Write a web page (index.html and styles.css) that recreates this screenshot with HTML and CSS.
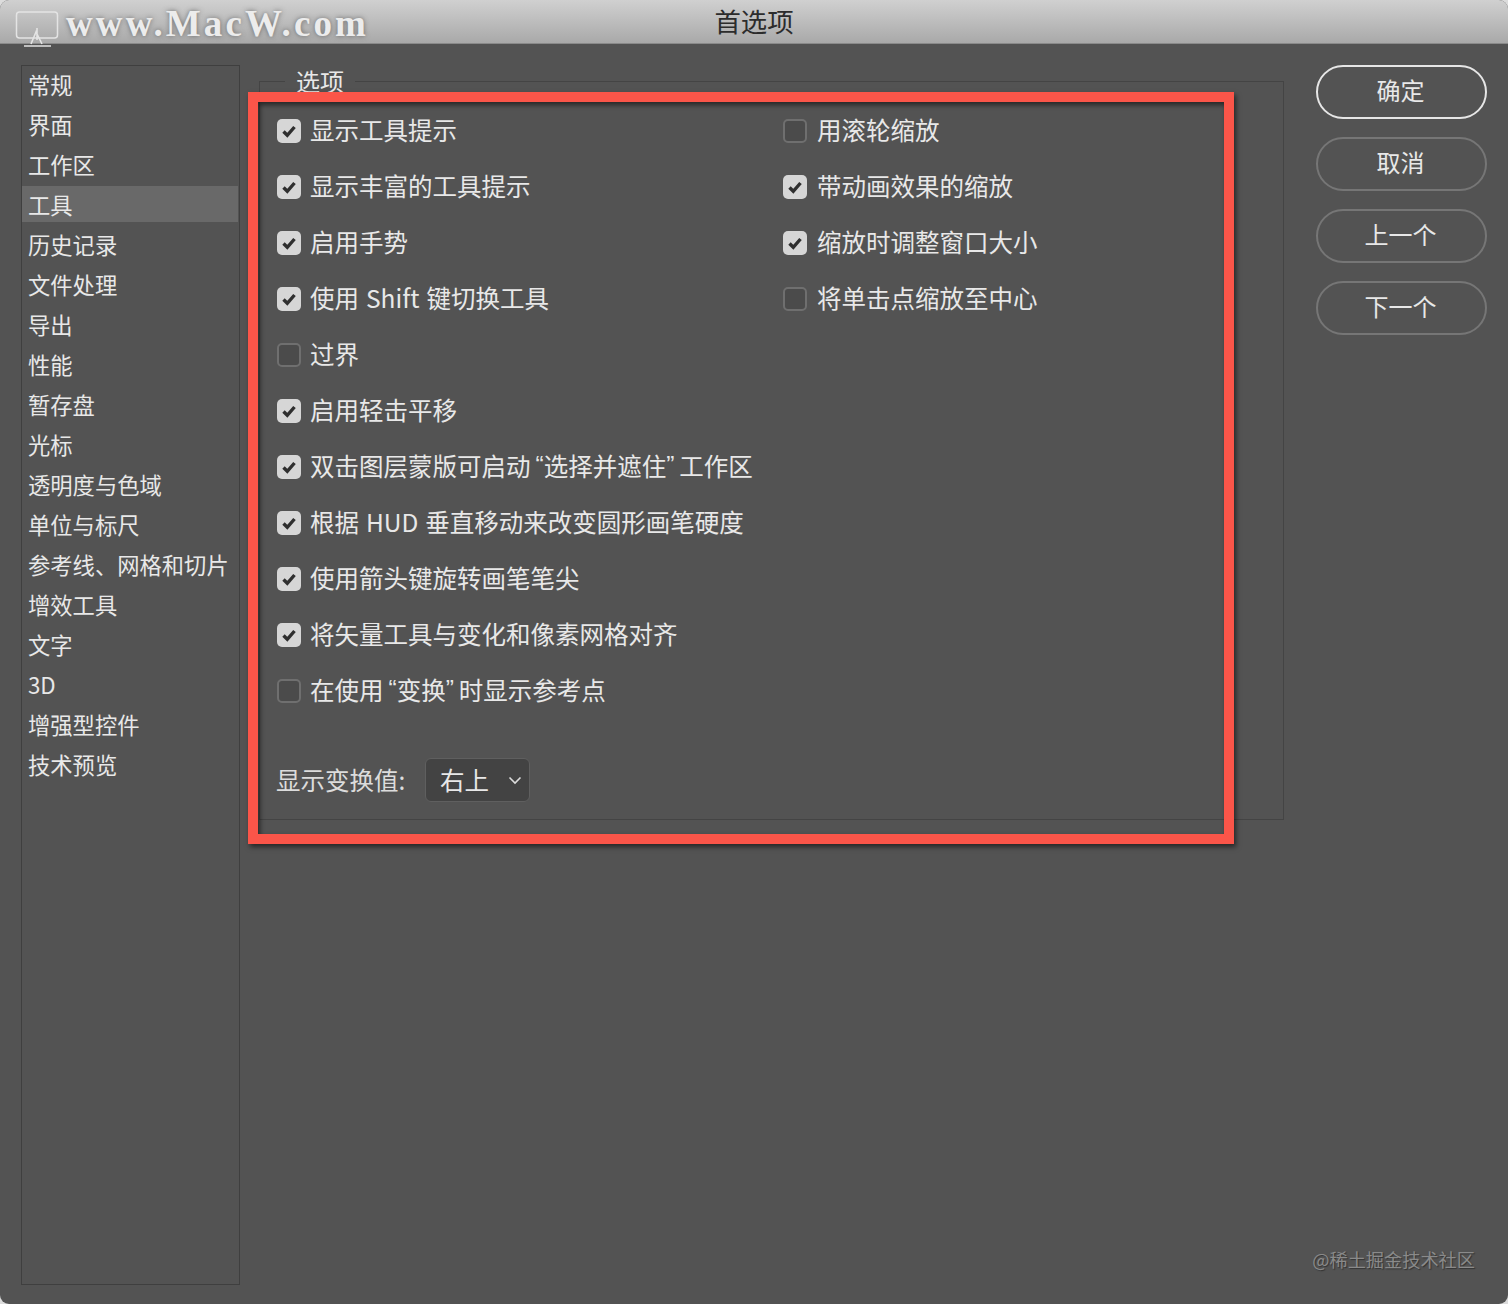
FILE: index.html
```html
<!DOCTYPE html>
<html lang="zh-CN">
<head>
<meta charset="utf-8">
<title>首选项</title>
<link rel="stylesheet" href="styles.css">
</head>
<body>
<div class="window">
  <header class="titlebar">首选项</header>
  <div class="brand">
    <svg class="brand-icon" viewBox="0 0 44 46" width="44" height="46">
      <rect x="1.5" y="10" width="41" height="26" rx="3" fill="none" stroke="#e4e4e4" stroke-width="1.5"/>
      <path d="M22 26v12M16 42l5-12 6 12M9 44h27" fill="none" stroke="#e4e4e4" stroke-width="1.6"/>
    </svg>
    <span class="brand-text">www.MacW.com</span>
  </div>
  <main class="main">
    <nav class="sidebar">
      <div class="nav-item">常规</div>
      <div class="nav-item">界面</div>
      <div class="nav-item">工作区</div>
      <div class="nav-item selected">工具</div>
      <div class="nav-item">历史记录</div>
      <div class="nav-item">文件处理</div>
      <div class="nav-item">导出</div>
      <div class="nav-item">性能</div>
      <div class="nav-item">暂存盘</div>
      <div class="nav-item">光标</div>
      <div class="nav-item">透明度与色域</div>
      <div class="nav-item">单位与标尺</div>
      <div class="nav-item">参考线、网格和切片</div>
      <div class="nav-item">增效工具</div>
      <div class="nav-item">文字</div>
      <div class="nav-item">3D</div>
      <div class="nav-item">增强型控件</div>
      <div class="nav-item">技术预览</div>
    </nav>
    <fieldset class="group">
      <legend class="legend">选项</legend>
      <div class="columns">
        <div class="col col-left">
          <div class="row"><span class="box on"><svg viewBox="0 0 24 24"><path d="M6.5 12.5l3.8 3.8 7.2-8.3"/></svg></span>显示工具提示</div>
          <div class="row"><span class="box on"><svg viewBox="0 0 24 24"><path d="M6.5 12.5l3.8 3.8 7.2-8.3"/></svg></span>显示丰富的工具提示</div>
          <div class="row"><span class="box on"><svg viewBox="0 0 24 24"><path d="M6.5 12.5l3.8 3.8 7.2-8.3"/></svg></span>启用手势</div>
          <div class="row"><span class="box on"><svg viewBox="0 0 24 24"><path d="M6.5 12.5l3.8 3.8 7.2-8.3"/></svg></span>使用 Shift 键切换工具</div>
          <div class="row"><span class="box"></span>过界</div>
          <div class="row"><span class="box on"><svg viewBox="0 0 24 24"><path d="M6.5 12.5l3.8 3.8 7.2-8.3"/></svg></span>启用轻击平移</div>
          <div class="row"><span class="box on"><svg viewBox="0 0 24 24"><path d="M6.5 12.5l3.8 3.8 7.2-8.3"/></svg></span>双击图层蒙版可启动<span class="q-open">“</span>选择并遮住<span class="q-close">”</span>工作区</div>
          <div class="row"><span class="box on"><svg viewBox="0 0 24 24"><path d="M6.5 12.5l3.8 3.8 7.2-8.3"/></svg></span>根据 HUD 垂直移动来改变圆形画笔硬度</div>
          <div class="row"><span class="box on"><svg viewBox="0 0 24 24"><path d="M6.5 12.5l3.8 3.8 7.2-8.3"/></svg></span>使用箭头键旋转画笔笔尖</div>
          <div class="row"><span class="box on"><svg viewBox="0 0 24 24"><path d="M6.5 12.5l3.8 3.8 7.2-8.3"/></svg></span>将矢量工具与变化和像素网格对齐</div>
          <div class="row"><span class="box"></span>在使用<span class="q-open">“</span>变换<span class="q-close">”</span>时显示参考点</div>
        </div>
        <div class="col col-right">
          <div class="row"><span class="box"></span>用滚轮缩放</div>
          <div class="row"><span class="box on"><svg viewBox="0 0 24 24"><path d="M6.5 12.5l3.8 3.8 7.2-8.3"/></svg></span>带动画效果的缩放</div>
          <div class="row"><span class="box on"><svg viewBox="0 0 24 24"><path d="M6.5 12.5l3.8 3.8 7.2-8.3"/></svg></span>缩放时调整窗口大小</div>
          <div class="row"><span class="box"></span>将单击点缩放至中心</div>
        </div>
      </div>
      <div class="transform">
        <span class="transform-label">显示变换值:</span>
        <div class="select"><span class="select-value">右上</span><svg viewBox="0 0 14 10" width="14" height="10"><path d="M1.5 2.5L7 8l5.5-5.5"/></svg></div>
      </div>
    </fieldset>
    <aside class="buttons">
      <div class="btn primary">确定</div>
      <div class="btn">取消</div>
      <div class="btn">上一个</div>
      <div class="btn">下一个</div>
    </aside>
  </main>
  <div class="highlight"></div>
  <div class="credit">@稀土掘金技术社区</div>
</div>
</body>
</html>
```
FILE: styles.css
```css
* { box-sizing: border-box; }
html { background: #dcdcdc; }
body { margin: 0; }
.window {
  position: relative;
  width: 1508px;
  height: 1304px;
  overflow: hidden;
  background: #535353;
  border-radius: 9px;
  color: #e8e8e8;
  font-family: "Noto Sans CJK SC", "Noto Sans", sans-serif;
}
.titlebar {
  height: 44px;
  display: flex;
  align-items: center;
  justify-content: center;
  padding-bottom: 1px;
  background: linear-gradient(#d0d0d0, #a9a9a9);
  border-bottom: 1px solid #8a8a8a;
  color: #2c2c2c;
  font-size: 26.4px;
  line-height: 1;
}
.brand {
  position: absolute;
  left: 15px;
  top: 0;
  display: flex;
  align-items: center;
  height: 50px;
  gap: 7px;
  font-family: "Liberation Serif", serif;
  font-weight: 700;
  font-size: 37px;
  letter-spacing: 3.1px;
  color: #ececec;
  text-shadow: 0 0 5px rgba(70, 70, 70, .7);
}
.brand-icon { flex: none; }
.brand-text { padding-bottom: 4px; }
.main {
  display: flex;
  align-items: flex-start;
  padding: 21px 21px 0;
}
.sidebar {
  width: 219px;
  height: 1220px;
  flex: none;
  padding: 0 1px 0 0;
  border: 1px solid #3f3f3f;
  font-size: 22.3px;
}
.nav-item {
  height: 36px;
  margin-bottom: 4px;
  line-height: 36px;
  padding-left: 6px;
  white-space: nowrap;
}
.nav-item.selected { background: #696969; }
.group {
  flex: none;
  width: 1025px;
  height: 755px;
  margin: 0 0 0 19px;
  padding: 6px 0 0 17px;
  border: 1px solid #444;
  min-width: 0;
}
.legend {
  margin-left: 8px;
  padding: 0 11px;
  font-size: 24px;
  line-height: 32px;
}
.columns { display: flex; }
.col-left { width: 506px; flex: none; }
.row {
  height: 56px;
  padding-bottom: 4px;
  display: flex;
  align-items: center;
  font-size: 24.5px;
  word-spacing: 1.5px;
  white-space: pre;
}
.q-open, .q-close { font-family: "Liberation Sans", sans-serif; }
.q-open { padding-left: 5px; }
.q-close { padding-right: 5px; }
.box {
  width: 24px;
  height: 24px;
  flex: none;
  margin: 3px 9px 0 0;
  background: #4b4b4b;
  border: 2px solid #6f6f6f;
  border-radius: 5px;
}
.col-right .box { margin-right: 10px; }
.box.on {
  background: #d6d6d6;
  border: 0;
}
.box svg { display: block; width: 24px; height: 24px; }
.box path {
  fill: none;
  stroke: #2f2f2f;
  stroke-width: 3.4;
}
.transform {
  display: flex;
  align-items: center;
  margin: 39px 0 0 -1px;
  font-size: 24.5px;
}
.transform-label { width: 149px; padding-bottom: 2px; color: #dcdcdc; }
.select {
  width: 105px;
  height: 44px;
  display: flex;
  align-items: center;
  justify-content: space-between;
  padding: 0 7px 0 14px;
  background: #434343;
  border: 1.5px solid #5f5f5f;
  border-radius: 6px;
}
.select-value { padding-bottom: 2px; }
.select path {
  fill: none;
  stroke: #dcdcdc;
  stroke-width: 1.6;
}
.buttons {
  width: 171px;
  flex: none;
  margin-left: 32px;
  display: flex;
  flex-direction: column;
  gap: 18px;
}
.btn {
  height: 54px;
  display: flex;
  align-items: center;
  justify-content: center;
  padding: 0 2px 5px 0;
  border: 2px solid #767676;
  border-radius: 27px;
  font-size: 24px;
}
.btn.primary { border-color: #e6e6e6; }
.highlight {
  position: absolute;
  left: 248px;
  top: 92px;
  width: 986px;
  height: 752px;
  border: 10px solid #fa5549;
  box-shadow: 2px 3px 5px rgba(0, 0, 0, .55), inset 2px 3px 5px rgba(0, 0, 0, .55);
}
.credit {
  position: absolute;
  right: 33px;
  top: 1246px;
  font-size: 18.2px;
  line-height: 26px;
  color: #8a8a8a;
  text-shadow: 1px 1px 1px #333;
}
```
